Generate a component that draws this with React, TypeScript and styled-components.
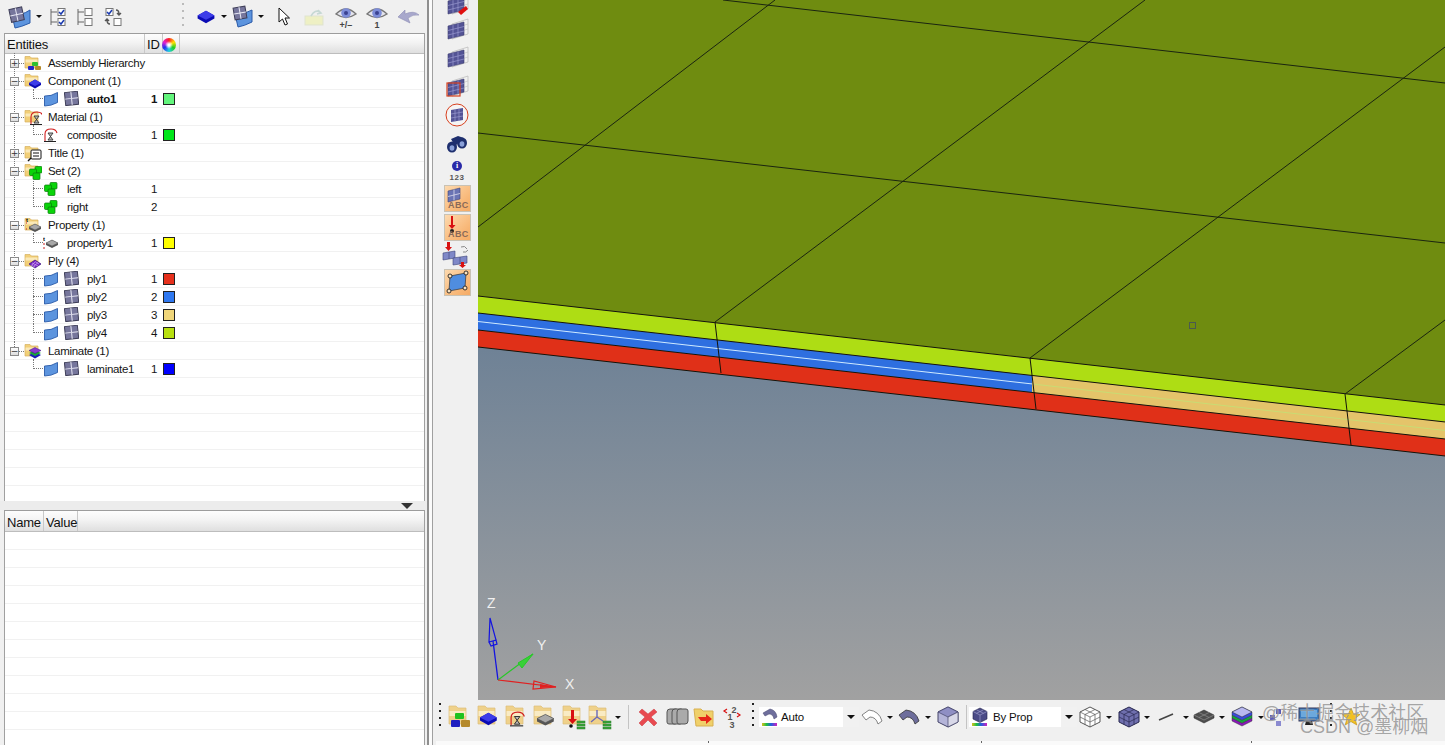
import React from "react";
import styled, { createGlobalStyle } from "styled-components";

const Global = createGlobalStyle`
  html, body { margin: 0; padding: 0; overflow: hidden; background: #f0f0f0; }
  body { font-family: "Liberation Sans", Arial, sans-serif; color: #111; }
`;

const Root = styled.div`
  position: relative;
  display: flex;
  width: 1445px;
  height: 745px;
  overflow: hidden;
  background: #f0f0f0;
`;

const LeftPanel = styled.div`
  display: flex;
  flex-direction: column;
  width: 427px;
  flex: none;
`;

const Sash = styled.div`
  width: 6px;
  flex: none;
  box-sizing: border-box;
  border-left: 2px solid #8f8f8f;
  border-right: 1px solid #a0a0a0;
  background: #fbfbfb;
`;

const Main = styled.div`
  display: flex;
  flex-direction: column;
  flex: 1;
  min-width: 0;
`;

const Work = styled.div`
  display: flex;
  height: 700px;
  flex: none;
`;

const TopBar = styled.div`
  display: flex;
  align-items: center;
  height: 33px;
  flex: none;
  padding-left: 8px;
  box-sizing: border-box;
`;

const Slot = styled.div<{ $w: number; $ml?: number }>`
  display: flex;
  align-items: center;
  justify-content: center;
  flex: none;
  width: ${(p) => p.$w}px;
  margin-left: ${(p) => p.$ml || 0}px;
`;

const Caret = styled.i`
  display: block;
  width: 0;
  height: 0;
  border-left: 3px solid transparent;
  border-right: 3px solid transparent;
  border-top: 3px solid #111;
`;

const Grip = styled.div<{ $h?: number; $color?: string }>`
  width: 2px;
  height: ${(p) => p.$h || 28}px;
  background-image: repeating-linear-gradient(
    to bottom,
    ${(p) => p.$color || "#222"} 0 2px,
    transparent 2px 7px
  );
`;

const Separator = styled.div`
  width: 1px;
  height: 24px;
  background: #c4c4c4;
`;

const TableBox = styled.div<{ $h: number }>`
  display: flex;
  flex-direction: column;
  flex: none;
  height: ${(p) => p.$h}px;
  margin: 0 2px 0 4px;
  box-sizing: border-box;
  border-left: 1px solid #a0a0a0;
  border-right: 1px solid #a0a0a0;
  background: #fff;
  overflow: hidden;
`;

const Header = styled.div<{ $h: number }>`
  display: flex;
  flex: none;
  height: ${(p) => p.$h}px;
  box-sizing: border-box;
  border-top: 1px solid #9c9c9c;
  border-bottom: 1px solid #bdbdbd;
  background: linear-gradient(#fdfdfd, #f3f3f3 45%, #dfdfdf);
`;

const HeadCell = styled.div<{ $w?: number }>`
  display: flex;
  align-items: center;
  flex: none;
  width: ${(p) => (p.$w ? `${p.$w}px` : "auto")};
  box-sizing: border-box;
  padding: 2px 0 0 2px;
  border-right: 1px solid #c8c8c8;
  font-size: 13px;
  letter-spacing: -0.2px;
  white-space: nowrap;
`;

const Wheel = styled.div`
  width: 14px;
  height: 14px;
  margin-left: -3px;
  border-radius: 50%;
  background: radial-gradient(circle, #fff 0 1px, transparent 4px),
    conic-gradient(#ff2020, #ffe000, #20d020, #20d0e0, #2030f0, #e020d0, #ff2020);
`;

const Row = styled.div<{ $trunk?: "full" | "end"; $branch?: "full" | "end" }>`
  position: relative;
  display: grid;
  grid-template-columns: 140px 19px 15px 1fr;
  align-items: center;
  flex: none;
  height: 18px;
  box-sizing: border-box;
  border-bottom: 1px solid #f1f1f1;
  font-size: 11.5px;
  letter-spacing: -0.3px;
  color: #151515;

  &::before {
    content: "";
    display: ${(p) => (p.$trunk ? "block" : "none")};
    position: absolute;
    left: 9px;
    top: -1px;
    height: ${(p) => (p.$trunk === "end" ? "10px" : "19px")};
    border-left: 1px dotted #777;
  }
  &::after {
    content: "";
    display: ${(p) => (p.$branch ? "block" : "none")};
    position: absolute;
    left: 28px;
    top: -1px;
    height: ${(p) => (p.$branch === "end" ? "10px" : "19px")};
    border-left: 1px dotted #777;
  }
`;

const NameCell = styled.div<{ $pad: number }>`
  display: flex;
  align-items: center;
  padding-left: ${(p) => p.$pad}px;
  white-space: nowrap;
`;

const Expander = styled.span`
  position: relative;
  z-index: 1;
  display: flex;
  align-items: center;
  justify-content: center;
  width: 9px;
  height: 9px;
  box-sizing: border-box;
  flex: none;
  border: 1px solid #8b8b8b;
  background: linear-gradient(#fff, #ddd);
  font-size: 9px;
  line-height: 7px;
  letter-spacing: 0;
  font-family: "DejaVu Sans", sans-serif;
  color: #333;
`;

const Conn = styled.span<{ $w: number }>`
  flex: none;
  width: ${(p) => p.$w}px;
  height: 0;
  border-top: 1px dotted #777;
`;

const Label = styled.span<{ $ml: number; $bold?: boolean }>`
  margin-left: ${(p) => p.$ml}px;
  font-weight: ${(p) => (p.$bold ? 700 : 400)};
`;

const IdCell = styled.div<{ $bold?: boolean }>`
  padding-left: 6px;
  font-weight: ${(p) => (p.$bold ? 700 : 400)};
`;

const Swatch = styled.div<{ $c: string }>`
  width: 12px;
  height: 12px;
  margin-left: -1px;
  box-sizing: border-box;
  border: 1px solid #222;
  background: ${(p) => p.$c};
`;

const SashRow = styled.div`
  display: flex;
  justify-content: flex-end;
  align-items: center;
  flex: none;
  height: 9px;
  padding-right: 14px;
  background: #ececec;
`;

const SashArrow = styled.i`
  display: block;
  width: 0;
  height: 0;
  border-left: 6px solid transparent;
  border-right: 6px solid transparent;
  border-top: 6px solid #333;
`;

const Strip = styled.div`
  display: flex;
  flex-direction: column;
  align-items: center;
  box-sizing: border-box;
  width: 45px;
  padding-left: 3px;
  flex: none;
  background: #f0f0f0;
  overflow: hidden;
`;

const StripSlot = styled.div<{ $h: number; $mt?: number }>`
  display: flex;
  align-items: center;
  justify-content: center;
  flex: none;
  height: ${(p) => p.$h}px;
  margin-top: ${(p) => p.$mt || 0}px;
`;

const InfoStack = styled.div`
  display: flex;
  flex-direction: column;
  align-items: center;
  gap: 3px;
`;

const InfoDot = styled.div`
  width: 10px;
  height: 10px;
  border-radius: 50%;
  background: #2a2aa8;
  color: #fff;
  font: bold 8px/10px "Liberation Serif", serif;
  text-align: center;
`;

const Num = styled.div`
  font-size: 8px;
  font-weight: 700;
  letter-spacing: 0.6px;
  line-height: 8px;
  color: #555;
`;

const OrangeBtn = styled.div<{ $mt?: number; $center?: boolean }>`
  position: relative;
  display: flex;
  align-items: ${(p) => (p.$center ? "center" : "flex-start")};
  justify-content: ${(p) => (p.$center ? "center" : "flex-start")};
  flex: none;
  width: 27px;
  height: 27px;
  margin-top: ${(p) => p.$mt || 0}px;
  box-sizing: border-box;
  padding: ${(p) => (p.$center ? "0" : "1px 0 0 2px")};
  border: 1px solid #c9c2b4;
  background: linear-gradient(135deg, #fdd9ae, #f8b777 70%, #f5ab66);
`;

const AbcText = styled.div`
  position: absolute;
  right: 1px;
  bottom: 1px;
  font-size: 9px;
  line-height: 10px;
  font-weight: 700;
  letter-spacing: 0.3px;
  color: #8a6a58;
`;

const Viewport = styled.div`
  flex: 1;
  min-width: 0;
  background: linear-gradient(#5f7a90 0, #6f8296 50%, #a1a1a1 100%);
`;

const CanvasSvg = styled.svg`
  display: block;
`;

const BottomBar = styled.div`
  display: flex;
  flex-direction: column;
  height: 45px;
  flex: none;
`;

const BottomTools = styled.div`
  display: flex;
  align-items: center;
  box-sizing: border-box;
  height: 41px;
  padding: 0 0 7px 3px;
  flex: none;
`;

const Drop = styled.div<{ $w: number }>`
  display: flex;
  align-items: center;
  flex: none;
  width: ${(p) => p.$w}px;
  height: 20px;
  box-sizing: border-box;
  padding-left: 3px;
  background: #fff;
  font-size: 11.5px;
  letter-spacing: -0.2px;
`;

const DropText = styled.span<{ $ml: number }>`
  margin-left: ${(p) => p.$ml}px;
  flex: 1;
`;

const DropBtn = styled.div`
  display: flex;
  align-items: center;
  justify-content: center;
  width: 16px;
  height: 20px;
  background: #f1f1f1;
  & > i {
    border-left-width: 4px;
    border-right-width: 4px;
    border-top-width: 4px;
  }
`;

const Status = styled.div`
  display: flex;
  flex: 1;
  margin-left: 3px;
  background: #fafafa;
`;

const StatusCell = styled.div<{ $w: number }>`
  width: ${(p) => p.$w}px;
  flex: none;
  height: 2px;
  border-right: 1px solid #666;
`;

const Watermark = styled.div<{ $x: number; $y: number; $size: number }>`
  position: absolute;
  left: ${(p) => p.$x}px;
  top: ${(p) => p.$y}px;
  font-family: "Liberation Sans", "Noto Sans CJK SC", sans-serif;
  font-size: ${(p) => p.$size}px;
  line-height: 1;
  white-space: nowrap;
  color: rgba(110, 110, 110, 0.62);
  text-shadow: 0 0 1px rgba(255, 255, 255, 0.6);
  pointer-events: none;
`;

/* ---------- small drawings ---------- */

const Svg = ({ w = 18, h = 18, vb, children }: { w?: number; h?: number; vb?: string; children?: React.ReactNode }) => (
  <svg width={w} height={h} viewBox={vb || `0 0 ${w} ${h}`} style={{ display: "block", flex: "none" }}>
    {children}
  </svg>
);

const FolderShape = () => (
  <g>
    <path d="M1 2.5 h5 l1.5 1.5 h6.5 v10 h-13z" fill="#f2cf78" stroke="#d6b060" strokeWidth=".7" />
    <path d="M1.5 5.5 h12 v3 h-12z" fill="#fae9b8" />
  </g>
);

const BlueBox = ({ x = 0, y = 0, s = 1 }: { x?: number; y?: number; s?: number }) => (
  <g transform={`translate(${x} ${y}) scale(${s})`}>
    <path d="M0 4 L6 0.5 L12 4 V6 L6 9.5 L0 6z" fill="#0b0bb4" />
    <path d="M0 4 L6 0.5 L12 4 L6 7z" fill="#3c3ce8" />
  </g>
);

const GreyBox = ({ x = 0, y = 0, s = 1 }: { x?: number; y?: number; s?: number }) => (
  <g transform={`translate(${x} ${y}) scale(${s})`}>
    <path d="M0 4 L6 1 L12 4 V6 L6 9 L0 6z" fill="#555" />
    <path d="M0 4 L6 1 L12 4 L6 7z" fill="#a8a8a8" stroke="#555" strokeWidth=".5" />
  </g>
);

const Arch = ({ x = 0, y = 0 }: { x?: number; y?: number }) => (
  <g transform={`translate(${x} ${y})`} fill="none">
    <path d="M1 13 V6 Q1 1 7 1 Q12 1 13 5" stroke="#d02020" strokeWidth="1.1" />
    <path d="M0 13.5 H12" stroke="#222" strokeWidth="1" />
    <path d="M4 5 H9 L4 12 H9z" stroke="#333" strokeWidth=".9" fill="#bbb" />
  </g>
);

const Blocks = ({ x = 0, y = 0 }: { x?: number; y?: number }) => (
  <g transform={`translate(${x} ${y})`} fill="#0ad40a" stroke="#0a7a0a" strokeWidth=".7">
    <rect x="6" y="0.5" width="7" height="6.5" rx="1" />
    <rect x="0.5" y="3" width="7" height="6.5" rx="1" />
    <rect x="4" y="7" width="7" height="6.5" rx="1" />
  </g>
);

const FolderAsm = () => (
  <Svg>
    <FolderShape />
    <rect x="8" y="8" width="6" height="4" rx="1" fill="#2fc12f" />
    <rect x="4" y="12" width="6" height="4" rx="1" fill="#2525c8" />
    <rect x="11" y="12" width="6" height="4" rx="1" fill="#b58a2c" />
  </Svg>
);
const FolderBox = () => (
  <Svg>
    <FolderShape />
    <BlueBox x={5} y={7} />
  </Svg>
);
const FolderMat = () => (
  <Svg>
    <FolderShape />
    <Arch x={6} y={3} />
  </Svg>
);
const FolderTitle = () => (
  <Svg>
    <FolderShape />
    <rect x="7" y="6" width="10" height="9" rx="1" fill="#fff" stroke="#111" />
    <path d="M9 9h6M9 12h6" stroke="#111" />
    <path d="M7 14 L4 17" stroke="#111" strokeWidth="1.4" />
  </Svg>
);
const FolderSet = () => (
  <Svg>
    <FolderShape />
    <Blocks x={5} y={4} />
  </Svg>
);
const FolderProp = () => (
  <Svg>
    <FolderShape />
    <GreyBox x={5} y={7} />
    <path d="M2 7h1M2 13h1" stroke="#c22" />
    <text x="2" y="6" fontSize="6" fontWeight="700" fontFamily="Liberation Sans">t</text>
  </Svg>
);
const PlyDiamond = ({ y = 7 }: { y?: number }) => (
  <g transform={`translate(5 ${y})`}>
    <path d="M0 5 L6 1 L12 5 L6 9z" fill="#7a22c8" stroke="#36107a" strokeWidth=".7" />
    <path d="M3 4 L9 7 M6 2.5 L10 5 M2 6 L6 8 M6 3 L3 6 M9 3.5 L5 7" stroke="#d8c0f0" strokeWidth=".6" />
  </g>
);
const FolderPly = () => (
  <Svg>
    <FolderShape />
    <PlyDiamond />
  </Svg>
);
const FolderLam = () => (
  <Svg>
    <FolderShape />
    <path d="M5 13 L11 10 L17 13 L11 16.5z" fill="#1a1ab8" />
    <path d="M5 11 L11 8 L17 11 L11 14z" fill="#18a838" />
    <path d="M5 8.5 L11 5.5 L17 8.5 L11 11.5z" fill="#8a3ad0" stroke="#36107a" strokeWidth=".5" />
  </Svg>
);

const ShellPath = () => (
  <path d="M1.5 5 Q8 5.5 14.5 1.5 V11.5 Q8 15 1.5 15z" fill="#5c94de" stroke="#2a5aa8" strokeWidth=".9" />
);
const Shell = () => (
  <Svg w={16} h={16}>
    <ShellPath />
  </Svg>
);
const MeshSquare = ({ x = 1, y = 1, s = 13 }: { x?: number; y?: number; s?: number }) => (
  <g>
    <rect x={x} y={y} width={s} height={s} fill="#76769c" stroke="#3e3e58" />
    <path
      d={`M${x + s / 2} ${y} v${s} M${x} ${y + s / 2} h${s}`}
      stroke="#e8e8f4"
      strokeWidth="1"
    />
  </g>
);
const Mesh = () => (
  <Svg w={15} h={15}>
    <g transform="rotate(-6 7 7)">
      <MeshSquare />
    </g>
  </Svg>
);
const ShellMesh = () => (
  <Svg w={24} h={24}>
    <path d="M4 10 Q13 11 22 5 V18 Q13 22 7 23z" fill="#5c94de" stroke="#2a5aa8" />
    <g transform="rotate(-12 9 9)">
      <MeshSquare x={2} y={3} s={13} />
    </g>
  </Svg>
);
const ShellMeshSmall = () => (
  <Svg w={22} h={24}>
    <path d="M3 9 Q12 10 20 5 V17 Q12 21 6 22z" fill="#5c94de" stroke="#2a5aa8" />
    <g transform="rotate(-10 8 8)">
      <MeshSquare x={2} y={2} s={12} />
    </g>
  </Svg>
);
const Checks = ({ on, swap }: { on?: boolean; swap?: boolean }) => (
  <Svg w={20} h={20}>
    {swap ? (
      <g fill="none" stroke="#555" strokeWidth="1.4">
        <path d="M13 3 Q16 3 16 7 M14 6 L16 8 L18 6" />
        <path d="M7 17 Q4 17 4 13 M2 14 L4 12 L6 14" />
      </g>
    ) : (
      <path d="M2 2 V18 M2 5 H8 M2 15 H8" stroke="#666" fill="none" />
    )}
    <rect x={swap ? 3 : 9} y="1.5" width="7" height="7" fill="#fff" stroke="#777" />
    <rect x={swap ? 11 : 9} y="11.5" width="7" height="7" fill="#fff" stroke="#777" />
    {on && (
      <g fill="none" stroke="#1a3ab0" strokeWidth="1.5">
        <path d={swap ? "M4 5 L6 7 L9 3" : "M10 5 L12 7 L15 3"} />
        {!swap && <path d="M10 15 L12 17 L15 13" />}
      </g>
    )}
  </Svg>
);
const CursorIcon = () => (
  <Svg w={14} h={20}>
    <path d="M2 1 V15 L5.5 12 L8 18 L10.5 17 L8 11 L12.5 11z" fill="#fff" stroke="#111" />
  </Svg>
);
const PaleBox = () => (
  <Svg w={22} h={20}>
    <rect x="2" y="9" width="18" height="9" fill="#eef0c4" stroke="#dfe3d0" />
    <path d="M8 9 Q12 2 17 5 M15 3 L18 6 L14 7" fill="none" stroke="#c6d8d4" strokeWidth="1.6" />
  </Svg>
);
const Eye = ({ mark }: { mark: string }) => (
  <Svg w={24} h={26}>
    <path d="M2 10 Q12 0 22 10 Q12 17 2 10z" fill="#e4e4ec" stroke="#777" strokeWidth="1.4" />
    <circle cx="12" cy="9" r="4.8" fill="#7c8cd8" />
    <circle cx="12" cy="9" r="2" fill="#3a4290" />
    <text x="12" y="24" textAnchor="middle" fontSize="9" fontWeight="700" fontFamily="Liberation Sans" fill="#444">
      {mark}
    </text>
  </Svg>
);
const UndoArrow = () => (
  <Svg w={24} h={20}>
    <path d="M2 10 L9 3 V7 Q18 3 23 8 Q17 7 12 11 L14 16z" fill="#a8a8cc" stroke="#8c8cb4" strokeWidth=".6" />
  </Svg>
);

const WireSheet = ({ box, red }: { box?: "square"; red?: boolean }) => (
  <Svg w={26} h={26}>
    <path d="M8 7 L24 2 V17 L8 22z" fill="none" stroke="#b8b8b8" strokeWidth=".7" />
    <path d="M13 5.5 V20.5 M18 4 V19 M8 12 L24 7 M8 17 L24 12" stroke="#c0c0c0" strokeWidth=".6" fill="none" />
    <path d="M4 9 L20 5 V18 L4 22z" fill="#535395" stroke="#3c3c70" strokeWidth=".6" />
    <path d="M9 8 V21 M14 6.5 V19.5 M4 13.5 L20 9.5 M4 18 L20 14" stroke="#9a9ad0" strokeWidth=".7" fill="none" />
    {box === "square" && <rect x="3" y="9" width="13" height="13" fill="none" stroke="#d8401e" strokeWidth="1.2" />}
    {red && <path d="M14 20 L22 14 L24 17 L17 23z" fill="#e01010" />}
  </Svg>
);
const CircleSheet = () => (
  <Svg w={26} h={26}>
    <circle cx="13" cy="13" r="11" fill="#f5f5f5" stroke="#d8401e" strokeWidth="1" />
    <path d="M7 8 L19 6 V18 L7 20z" fill="#535395" />
    <path d="M11 7 V19.5 M15 6.5 V19 M7 12 L19 10 M7 16 L19 14" stroke="#9a9ad0" strokeWidth=".7" />
  </Svg>
);
const Binoculars = () => (
  <Svg w={22} h={20}>
    <g fill="#1e2f6e">
      <ellipse cx="6" cy="13" rx="5" ry="5.5" />
      <ellipse cx="16" cy="9" rx="5" ry="5.5" />
      <path d="M5 5 L12 2 L18 4 L12 9 L9 12z" />
    </g>
    <ellipse cx="6" cy="14" rx="2.4" ry="2.8" fill="#8aa0d8" />
    <ellipse cx="16" cy="10" rx="2.4" ry="2.8" fill="#8aa0d8" />
  </Svg>
);
const TinySheet = () => (
  <Svg w={16} h={16}>
    <path d="M1 4 L13 1 V12 L1 15z" fill="#6a74b4" stroke="#3e4478" strokeWidth=".6" />
    <path d="M7 2.5 V13.5 M1 9.5 L13 6.5" stroke="#dde" strokeWidth=".8" />
  </Svg>
);
const RedPin = () => (
  <Svg w={10} h={18}>
    <path d="M4 0 H6 V9 H8.5 L5 13 L1.5 9 H4z" fill="#d81010" />
    <circle cx="5" cy="15" r="2" fill="#222" />
  </Svg>
);
const Swap = () => (
  <Svg w={32} h={26}>
    <path d="M6 0 H9 V5 H11 L7.5 9 L4 5 H6z" fill="#d81010" />
    <path d="M2 11 L14 9 V16 L2 18z M8 10 V17" fill="#7f88c8" stroke="#3e4478" strokeWidth=".6" />
    <path d="M12 16 L26 14 V21 L12 23z M19 15 V22" fill="#7f88c8" stroke="#3e4478" strokeWidth=".6" />
    <path d="M20 20 H23 V23 H25 L21.5 26 L18 23 H20z" fill="#d81010" />
    <path d="M20 5 Q24 3 26 7 M22 10 Q25 11 27 8" stroke="#888" fill="none" />
  </Svg>
);
const HandleSheet = () => (
  <Svg w={25} h={25}>
    <path d="M5 6 L21 3 L20 18 L4 21z" fill="#4f8de0" stroke="#333" strokeWidth=".7" />
    {[
      [5, 6],
      [21, 3],
      [20, 18],
      [4, 21],
    ].map(([x, y]) => (
      <circle key={x} cx={x} cy={y} r="2" fill="#fbe2c0" stroke="#222" strokeWidth=".9" />
    ))}
  </Svg>
);

/* bottom bar */
const FolderBig = ({ children }: { children?: React.ReactNode }) => (
  <Svg w={26} h={26} vb="0 0 26 26">
    <path d="M3 2 h7 l2 2 h8 v16 h-17z" fill="#efd18a" stroke="#dcbd78" strokeWidth=".7" />
    <path d="M3.5 7 h16 v5 h-16z" fill="#f9ebc4" />
    {children}
  </Svg>
);
const RedX = () => (
  <Svg w={20} h={20}>
    <path d="M4 2 L10 7 L16 2 L19 5 L13 10 L19 16 L16 19 L10 13 L4 19 L1 16 L7 10 L1 5z" fill="#e84a50" stroke="#c93a40" strokeWidth=".5" />
  </Svg>
);
const GreySheets = () => (
  <Svg w={24} h={22}>
    {[0, 5, 10].map((d) => (
      <path
        key={d}
        d={`M${2 + d} 6 Q${2 + d} 3 ${5 + d} 3 h6 q2 0 2 2 v10 q0 3 -3 3 h-6 q-2 0 -2 -2z`}
        fill="#aaa"
        stroke="#555"
      />
    ))}
  </Svg>
);
const FolderSwap = () => (
  <Svg w={24} h={24}>
    <path d="M2 4 h7 l2 2 h10 v15 h-17z" fill="#f0d06a" stroke="#d8b050" />
    <path d="M6 12 H14 V9 L20 14 L14 19 V16 H9z" fill="#e6261a" />
  </Svg>
);
const Renumber = () => (
  <Svg w={20} h={24}>
    <g fontFamily="Liberation Sans" fontSize="9" fontWeight="700" fill="#555" textAnchor="middle">
      <text x="12" y="8">2</text>
      <text x="8" y="15">1</text>
      <text x="10" y="23">3</text>
    </g>
    <path d="M5 4 L2 6 L5 8 M15 12 L18 10 L15 8" fill="none" stroke="#d81010" strokeWidth="1.2" />
  </Svg>
);
const AutoIco = ({ cube }: { cube?: boolean }) => (
  <Svg w={16} h={20}>
    {cube ? (
      <g>
        <path d="M8 1 L15 4.5 V12 L8 15.5 L1 12 V4.5z" fill="#4b4b86" stroke="#23234a" strokeWidth=".6" />
        <path d="M1 4.5 L8 8 L15 4.5 M8 8 V15.5 M4.5 2.8 L11.5 6.3 M11.5 2.8 L4.5 6.3" stroke="#a8a8d4" strokeWidth=".6" fill="none" />
      </g>
    ) : (
      <path d="M1 6 L8 2 Q14 3 15 10 L12 12 Q11 7 7 7 L3 9z" fill="#6e6e9c" stroke="#44446c" strokeWidth=".5" />
    )}
    <defs>
      <linearGradient id={cube ? "rb2" : "rb1"}>
        <stop offset="0" stopColor="#d8c020" />
        <stop offset=".3" stopColor="#20c040" />
        <stop offset=".6" stopColor="#2060e0" />
        <stop offset="1" stopColor="#d020c0" />
      </linearGradient>
    </defs>
    <rect x="0" y="16" width="15" height="3" fill={`url(#${cube ? "rb2" : "rb1"})`} />
  </Svg>
);
const Hood = ({ filled }: { filled?: boolean }) => (
  <Svg w={22} h={18}>
    <path
      d="M1 7 L8 2 Q18 3 21 13 L17 16 Q15 9 9 9 L5 12z"
      fill={filled ? "#6e6e9c" : "#fff"}
      stroke={filled ? "#333" : "#666"}
      strokeWidth=".8"
    />
  </Svg>
);
const Cube = () => (
  <Svg w={22} h={22}>
    <path d="M11 1 L21 6 V16 L11 21 L1 16 V6z" fill="#b4b4d8" stroke="#444468" />
    <path d="M1 6 L11 11 L21 6 L11 1z" fill="#8f8fc4" stroke="#444468" strokeWidth=".7" />
    <path d="M11 11 L21 6 V16 L11 21z" fill="#d8d8e8" stroke="#444468" strokeWidth=".7" />
  </Svg>
);
const GridCube = ({ fill, dark }: { fill: string; dark: string }) => (
  <Svg w={22} h={22}>
    <path d="M11 1 L21 6 V16 L11 21 L1 16 V6z" fill={fill} stroke={dark} />
    <path
      d="M1 6 L11 11 L21 6 M11 11 V21 M6 3.5 L16 8.5 M16 3.5 L6 8.5 M1 11 L11 16 L21 11 M6 8.5 V18.5 M16 8.5 V18.5"
      stroke={dark}
      strokeWidth=".7"
      fill="none"
    />
  </Svg>
);
const Slash = () => (
  <Svg w={16} h={10}>
    <path d="M1 8 L15 2" stroke="#444" strokeWidth="1.6" />
  </Svg>
);
const FlatTiles = () => (
  <Svg w={22} h={16}>
    <path d="M11 1 L21 6 V9 L11 14 L1 9 V6z" fill="#4e4e4e" stroke="#222" strokeWidth=".5" />
    <path d="M1 6 L11 11 L21 6 M6 3.5 L16 8.5 M16 3.5 L6 8.5" stroke="#8e8e8e" strokeWidth=".7" fill="none" />
  </Svg>
);
const Stack = () => (
  <Svg w={22} h={22}>
    <path d="M1 12 L11 17 L21 12 V15 L11 20 L1 15z" fill="#8a1ab8" stroke="#222" strokeWidth=".4" />
    <path d="M1 9 L11 14 L21 9 V12 L11 17 L1 12z" fill="#16a840" stroke="#222" strokeWidth=".4" />
    <path d="M1 6 L11 1 L21 6 V9 L11 14 L1 9z" fill="#3a4ae0" stroke="#222" strokeWidth=".4" />
    <path d="M1 6 L11 1 L21 6 L11 11z" fill="#b8b8f0" stroke="#222" strokeWidth=".5" />
  </Svg>
);
const Squares = () => (
  <Svg w={16} h={20}>
    <rect x="7" y="2" width="5" height="5" fill="#5a5ab4" />
    <rect x="1" y="8" width="5" height="5" fill="#5a5ab4" />
    <rect x="7" y="14" width="5" height="5" fill="#8a8ad0" />
  </Svg>
);
const Monitor = () => (
  <Svg w={24} h={22}>
    <rect x="2" y="2" width="20" height="13" fill="#3a7cc0" stroke="#335" />
    <rect x="4" y="4" width="16" height="7" fill="#6ca8dc" />
    <path d="M9 15 H15 L16 19 H8z" fill="#222" />
  </Svg>
);
const Star = () => (
  <Svg w={20} h={20}>
    <path d="M10 1 L12.6 7 L19 7.5 L14 11.6 L15.8 18 L10 14.6 L4.2 18 L6 11.6 L1 7.5 L7.4 7z" fill="#f2c020" stroke="#b88a10" strokeWidth=".6" />
  </Svg>
);
const GreenBars = () => (
  <g fill="#3aa83a" stroke="#2a7a2a" strokeWidth=".5">
    <rect x="17" y="17" width="8" height="2" />
    <rect x="17" y="20" width="8" height="2" />
    <rect x="17" y="23" width="8" height="2" />
  </g>
);
const RedArrowInFolder = () => (
  <g>
    <path d="M11 6 H14 V15 H17 L12.5 20 L8 15 H11z" fill="#d81010" />
    <circle cx="11" cy="22" r="1.8" fill="#111" />
    <GreenBars />
  </g>
);
const AxisInFolder = () => (
  <g>
    <path d="M11 6 V13 L5 18 M11 13 L17 17" stroke="#6a6ab8" strokeWidth="1.4" fill="none" />
    <GreenBars />
  </g>
);

/* ---------- data ---------- */

type TreeRow = {
  kind: "top" | "leaf" | "double";
  name: string;
  icon?: React.ReactNode;
  open?: boolean;
  id?: string;
  color?: string;
  bold?: boolean;
  trunk?: "full" | "end";
  branch?: "full" | "end";
};

const leafMat = (
  <Svg w={16} h={16}>
    <Arch x={1} y={1} />
  </Svg>
);
const leafSet = (
  <Svg w={16} h={16}>
    <Blocks x={1} y={1} />
  </Svg>
);
const leafProp = (
  <Svg w={16} h={16}>
    <GreyBox x={3} y={4} />
    <text x="0" y="6" fontSize="6" fontWeight="700" fontFamily="Liberation Sans">t</text>
    <path d="M0 9h2M0 13h2" stroke="#c22" />
  </Svg>
);

const rows: TreeRow[] = [
  { kind: "top", name: "Assembly Hierarchy", icon: <FolderAsm />, trunk: "full" },
  { kind: "top", name: "Component (1)", icon: <FolderBox />, open: true, trunk: "full" },
  { kind: "double", name: "auto1", id: "1", color: "#62f57c", bold: true, trunk: "full", branch: "end" },
  { kind: "top", name: "Material (1)", icon: <FolderMat />, open: true, trunk: "full" },
  { kind: "leaf", name: "composite", icon: leafMat, id: "1", color: "#00e61a", trunk: "full", branch: "end" },
  { kind: "top", name: "Title (1)", icon: <FolderTitle />, trunk: "full" },
  { kind: "top", name: "Set (2)", icon: <FolderSet />, open: true, trunk: "full" },
  { kind: "leaf", name: "left", icon: leafSet, id: "1", trunk: "full", branch: "full" },
  { kind: "leaf", name: "right", icon: leafSet, id: "2", trunk: "full", branch: "end" },
  { kind: "top", name: "Property (1)", icon: <FolderProp />, open: true, trunk: "full" },
  { kind: "leaf", name: "property1", icon: leafProp, id: "1", color: "#ffff00", trunk: "full", branch: "end" },
  { kind: "top", name: "Ply (4)", icon: <FolderPly />, open: true, trunk: "full" },
  { kind: "double", name: "ply1", id: "1", color: "#e6301c", trunk: "full", branch: "full" },
  { kind: "double", name: "ply2", id: "2", color: "#2f78f0", trunk: "full", branch: "full" },
  { kind: "double", name: "ply3", id: "3", color: "#f0d67a", trunk: "full", branch: "full" },
  { kind: "double", name: "ply4", id: "4", color: "#b8e010", trunk: "full", branch: "end" },
  { kind: "top", name: "Laminate (1)", icon: <FolderLam />, open: true, trunk: "end" },
  { kind: "double", name: "laminate1", id: "1", color: "#0000ff", branch: "end" },
];

const meshLines = [
  "478,227 775,0",
  "715,322 1145,0",
  "1030,358 1445,47",
  "1345,394 1445,320",
  "478,133 1445,243",
  "723,0 1445,83",
];

const slope = (x: number) => 296 + (x - 478) * 0.1127;
const band = (x1: number, x2: number, a: number, b: number) =>
  `${x1},${slope(x1) + a} ${x2},${slope(x2) + a} ${x2},${slope(x2) + b} ${x1},${slope(x1) + b}`;
const edge = (a: number) => `M478 ${slope(478) + a} L1445 ${slope(1445) + a}`;

function Canvas() {
  return (
    <CanvasSvg width={967} height={700} viewBox="478 0 967 700">
      <polygon points={`478,0 1445,0 1445,${slope(1445)} 478,${slope(478)}`} fill="#6f8c10" />
      {meshLines.map((p) => (
        <polyline key={p} points={p} stroke="#1a2410" strokeWidth="1" fill="none" />
      ))}
      <polygon points={band(478, 1445, 0, 17)} fill="#aedd14" />
      <polygon points={band(478, 1445, 17, 34)} fill="#e4c46a" />
      <polygon points={band(478, 1032, 17, 34)} fill="#2e6fe0" />
      <polygon points={band(478, 1445, 34, 51)} fill="#e03018" />
      <path d={`M478 ${slope(478) + 25.5} L1032 ${slope(1032) + 25.5}`} stroke="#cfeaff" strokeWidth="1" />
      <path d={`M1034 ${slope(1034) + 25.5} L1445 ${slope(1445) + 25.5}`} stroke="#c8dc74" strokeWidth="1" />
      {[0, 17, 34, 51].map((a) => (
        <path key={a} d={edge(a)} stroke="#14140a" strokeWidth="1" fill="none" />
      ))}
      <path d="M715 322 L721 373 M1030 358 L1036 409 M1345 394 L1351 445" stroke="#14140a" strokeWidth="1" />
      <rect x="1189.5" y="322.5" width="6" height="6" fill="none" stroke="#4a5a50" strokeWidth="1" />

      <path d="M498 680 L493 641" stroke="#1414e0" strokeWidth="1.3" />
      <path d="M490 618 L489 642 L496 640z M489 642 L491 646 L497 644 L496 640" fill="none" stroke="#1414e0" strokeWidth="1.2" />
      <path d="M498 680 L533 654" stroke="#28c828" strokeWidth="1.2" />
      <path d="M533 654 L518 663 L522 668z" fill="#38d038" stroke="#28c828" />
      <path d="M498 680 L556 687" stroke="#e02020" strokeWidth="1.2" />
      <path d="M556 687 L534 681 L533 689z" fill="none" stroke="#e02020" strokeWidth="1.2" />
      <path d="M556 687 L540 684 L540 688z" fill="#e02020" />
      <g fontFamily="Liberation Sans" fontSize="14" fill="#f0f0f0">
        <text x="487" y="608">Z</text>
        <text x="537" y="650">Y</text>
        <text x="565" y="689">X</text>
      </g>
    </CanvasSvg>
  );
}

export default function App() {
  return (
    <Root>
      <Global />
      <LeftPanel>
        <TopBar>
          <Slot $w={24}><ShellMesh /></Slot>
          <Slot $w={14}><Caret /></Slot>
          <Slot $w={26}><Checks on /></Slot>
          <Slot $w={28}><Checks /></Slot>
          <Slot $w={26}><Checks on swap /></Slot>
          <Slot $w={14} $ml={50}><Grip $color="#bbb" /></Slot>
          <Slot $w={24} $ml={4}><Svg w={22} h={14} vb="0 0 12 10"><BlueBox /></Svg></Slot>
          <Slot $w={12}><Caret /></Slot>
          <Slot $w={26}><ShellMeshSmall /></Slot>
          <Slot $w={10}><Caret /></Slot>
          <Slot $w={24} $ml={6}><CursorIcon /></Slot>
          <Slot $w={24} $ml={6}><PaleBox /></Slot>
          <Slot $w={28} $ml={6}><Eye mark="+/–" /></Slot>
          <Slot $w={28} $ml={3}><Eye mark="1" /></Slot>
          <Slot $w={24} $ml={5}><UndoArrow /></Slot>
        </TopBar>
        <TableBox $h={468}>
          <Header $h={21}>
            <HeadCell $w={140}>Entities</HeadCell>
            <HeadCell $w={18}>ID</HeadCell>
            <HeadCell $w={17}><Wheel /></HeadCell>
          </Header>
          {rows.map((r) => (
            <Row key={r.name} $trunk={r.trunk} $branch={r.branch}>
              {r.kind === "top" ? (
                <NameCell $pad={5}>
                  <Expander>{r.open ? "−" : "+"}</Expander>
                  <Conn $w={5} />
                  {r.icon}
                  <Label $ml={6}>{r.name}</Label>
                </NameCell>
              ) : r.kind === "leaf" ? (
                <NameCell $pad={28}>
                  <Conn $w={10} />
                  {r.icon}
                  <Label $ml={8}>{r.name}</Label>
                </NameCell>
              ) : (
                <NameCell $pad={28}>
                  <Conn $w={10} />
                  <Shell />
                  <Slot $w={19} $ml={3}><Mesh /></Slot>
                  <Label $ml={6} $bold={r.bold}>{r.name}</Label>
                </NameCell>
              )}
              <IdCell $bold={r.bold}>{r.id}</IdCell>
              {r.color ? <Swatch $c={r.color} /> : <span />}
            </Row>
          ))}
          {Array.from({ length: 8 }, (_, i) => (
            <Row key={i} />
          ))}
        </TableBox>
        <SashRow><SashArrow /></SashRow>
        <TableBox $h={235}>
          <Header $h={22}>
            <HeadCell $w={39}>Name</HeadCell>
            <HeadCell>Value</HeadCell>
          </Header>
          {Array.from({ length: 12 }, (_, i) => (
            <Row key={i} />
          ))}
        </TableBox>
      </LeftPanel>
      <Sash />
      <Main>
        <Work>
          <Strip>
            <StripSlot $h={28} $mt={-9}><WireSheet red /></StripSlot>
            <StripSlot $h={22}><WireSheet /></StripSlot>
            <StripSlot $h={34}><WireSheet /></StripSlot>
            <StripSlot $h={24}><WireSheet box="square" /></StripSlot>
            <StripSlot $h={32}><CircleSheet /></StripSlot>
            <StripSlot $h={26}><Binoculars /></StripSlot>
            <StripSlot $h={28}>
              <InfoStack>
                <InfoDot>i</InfoDot>
                <Num>123</Num>
              </InfoStack>
            </StripSlot>
            <OrangeBtn>
              <TinySheet />
              <AbcText>ABC</AbcText>
            </OrangeBtn>
            <OrangeBtn $mt={2}>
              <RedPin />
              <AbcText>ABC</AbcText>
            </OrangeBtn>
            <StripSlot $h={28}><Swap /></StripSlot>
            <OrangeBtn $center><HandleSheet /></OrangeBtn>
          </Strip>
          <Viewport>
            <Canvas />
          </Viewport>
        </Work>
        <BottomBar>
          <BottomTools>
            <Slot $w={8}><Grip /></Slot>
            <Slot $w={30}><FolderBig><g transform="translate(3 7)"><rect x="6" y="2" width="9" height="6" rx="1" fill="#1fc21f" /><rect x="2" y="9" width="9" height="7" rx="1" fill="#2020c0" /><rect x="12" y="9" width="9" height="7" rx="1" fill="#b58a2c" /></g></FolderBig></Slot>
            <Slot $w={28}><FolderBig><BlueBox x={5} y={8} s={1.4} /></FolderBig></Slot>
            <Slot $w={27}><FolderBig><g transform="translate(7 7) scale(1.1)"><Arch /></g></FolderBig></Slot>
            <Slot $w={30}><FolderBig><GreyBox x={6} y={9} s={1.4} /></FolderBig></Slot>
            <Slot $w={27}><FolderBig><RedArrowInFolder /></FolderBig></Slot>
            <Slot $w={26}><FolderBig><AxisInFolder /></FolderBig></Slot>
            <Slot $w={12}><Caret /></Slot>
            <Slot $w={8}><Separator /></Slot>
            <Slot $w={32}><RedX /></Slot>
            <Slot $w={26}><GreySheets /></Slot>
            <Slot $w={28}><FolderSwap /></Slot>
            <Slot $w={28}><Renumber /></Slot>
            <Slot $w={13}><Grip /></Slot>
            <Drop $w={100}>
              <AutoIco />
              <DropText $ml={3}>Auto</DropText>
              <DropBtn><Caret /></DropBtn>
            </Drop>
            <Slot $w={26}><Hood /></Slot>
            <Slot $w={10}><Caret /></Slot>
            <Slot $w={28}><Hood filled /></Slot>
            <Slot $w={10}><Caret /></Slot>
            <Slot $w={30}><Cube /></Slot>
            <Slot $w={6}><Separator /></Slot>
            <Drop $w={108}>
              <AutoIco cube />
              <DropText $ml={5}>By Prop</DropText>
              <DropBtn><Caret /></DropBtn>
            </Drop>
            <Slot $w={26}><GridCube fill="#fff" dark="#555" /></Slot>
            <Slot $w={12}><Caret /></Slot>
            <Slot $w={28}><GridCube fill="#6f6fae" dark="#26264e" /></Slot>
            <Slot $w={8}><Caret /></Slot>
            <Slot $w={30}><Slash /></Slot>
            <Slot $w={10}><Caret /></Slot>
            <Slot $w={26}><FlatTiles /></Slot>
            <Slot $w={10}><Caret /></Slot>
            <Slot $w={30}><Stack /></Slot>
            <Slot $w={8}><Caret /></Slot>
            <Slot $w={24}><Squares /></Slot>
            <Slot $w={40}><Monitor /></Slot>
            <Slot $w={4}><Grip /></Slot>
            <Slot $w={36}><Star /></Slot>
          </BottomTools>
          <Status>
            <StatusCell $w={272} />
            <StatusCell $w={272} />
            <StatusCell $w={269} />
          </Status>
        </BottomBar>
      </Main>
      <Watermark $x={1262} $y={704} $size={18}>@稀土掘金技术社区</Watermark>
      <Watermark $x={1300} $y={718} $size={18}>CSDN @墨柳烟</Watermark>
    </Root>
  );
}
